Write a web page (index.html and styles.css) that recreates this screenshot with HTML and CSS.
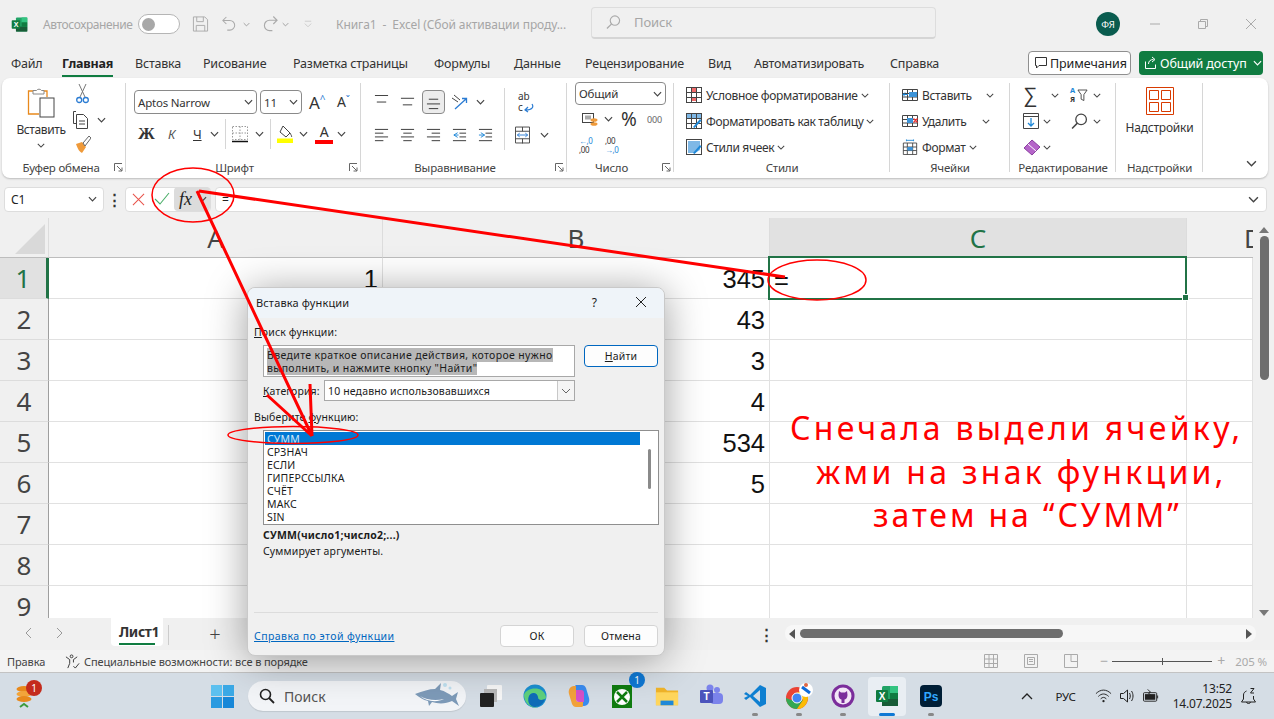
FILE: index.html
```html
<!DOCTYPE html>
<html lang="ru">
<head>
<meta charset="utf-8">
<title>Excel</title>
<link rel="stylesheet" href="styles.css">
</head>
<body>
<svg class="defs" width="0" height="0">
  <symbol id="chev" viewBox="0 0 10 6"><path d="M1 1l4 4 4-4" fill="none" stroke="#444" stroke-width="1.3"/></symbol>
  <symbol id="xl" viewBox="0 0 24 24"><rect x="7" y="2" width="16" height="20" rx="1.5" fill="#21a366"/><rect x="15" y="2" width="8" height="7" fill="#33c481"/><rect x="7" y="15" width="16" height="7" fill="#185c37"/><rect x="15" y="9" width="8" height="6" fill="#107c41"/><rect x="1" y="6" width="12" height="12" rx="1" fill="#107c41"/><text x="7" y="15.5" text-anchor="middle" font-size="10" font-weight="700" fill="#fff" font-family="Liberation Sans">X</text></symbol>
  <symbol id="launch" viewBox="0 0 9 9"><path d="M.5 8V.5H8M3 3l5 5M8 4.5V8H4.5" fill="none" stroke="#666"/></symbol>
  <symbol id="al-top" viewBox="0 0 16 16"><path d="M1 .5h14M3 7.5h10" stroke="#333" fill="none"/></symbol>
  <symbol id="al-mid" viewBox="0 0 16 16"><path d="M1 3.500h14M3 10.500h10" stroke="#333" fill="none"/></symbol>
  <symbol id="al-bot" viewBox="0 0 16 16"><path d="M3 4.500h10M1 9.500h14M3 14.500h10" stroke="#333" fill="none"/></symbol>
  <symbol id="al-l" viewBox="0 0 16 16"><path d="M1 1.5h14M1 5.5h9M1 9.5h14M1 13.5h9" stroke="#333" fill="none"/></symbol>
  <symbol id="al-c" viewBox="0 0 16 16"><path d="M1 1.5h14M3.5 5.5h9M1 9.5h14M3.5 13.5h9" stroke="#333" fill="none"/></symbol>
  <symbol id="al-r" viewBox="0 0 16 16"><path d="M1 1.5h14M6 5.5h9M1 9.5h14M6 13.5h9" stroke="#333" fill="none"/></symbol>
  <symbol id="ind-l" viewBox="0 0 16 16"><path d="M1 1.5h14M8 5.5h7M8 9.5h7M1 13.5h14" stroke="#333" fill="none"/><path d="M6 5L2 7.5 6 10M2 7.5h5" stroke="#1e88d8" fill="none"/></symbol>
  <symbol id="ind-r" viewBox="0 0 16 16"><path d="M1 1.5h14M8 5.5h7M8 9.5h7M1 13.5h14" stroke="#333" fill="none"/><path d="M3 5l4 2.5L3 10M1 7.5h6" stroke="#1e88d8" fill="none"/></symbol>
  <symbol id="styleico" viewBox="0 0 16 16"><rect x=".5" y=".5" width="15" height="15" fill="#fff" stroke="#444"/><rect x="5" y="1" width="6" height="4" fill="#f26b6b"/><rect x="5" y="10" width="6" height="4" fill="#f26b6b"/><path d="M5.5 1v14M10.5 1v14M1 5.5h14M1 10.5h14" stroke="#444" fill="none"/></symbol>
  <symbol id="tableico" viewBox="0 0 16 16"><rect x=".5" y=".5" width="15" height="15" fill="#fff" stroke="#444"/><rect x="1" y="1" width="14" height="4" fill="#7fb8e6"/><path d="M5.5 1v14M10.5 1v14M1 5.5h14M1 10.5h14" stroke="#444" fill="none"/><path d="M7 14l7-8 1.6 1.5-7 7.5z" fill="#1e88d8"/></symbol>
  <symbol id="cellico" viewBox="0 0 16 16"><rect x=".5" y=".5" width="15" height="15" fill="#fff" stroke="#444"/><path d="M2 2h12v9l-5 3H2z" fill="#7fb8e6"/><path d="M7 14l7-8 1.6 1.5-7 7.5z" fill="#1e88d8"/></symbol>
  <symbol id="insico" viewBox="0 0 16 16"><path d="M.5 2.5h15v11H.5zM5.5 2.5v11M10.5 2.5v11M.5 6.5h15M.5 10h15" fill="#fff" stroke="#444"/><rect x="7" y="5" width="8" height="5" fill="#3d94d8"/><path d="M6 7.5H1M3 5.5L1 7.5l2 2" stroke="#1e88d8" fill="none"/></symbol>
  <symbol id="delico" viewBox="0 0 16 16"><path d="M.5 2.5h15v11H.5zM5.5 2.5v11M10.5 2.5v11M.5 6.5h15M.5 10h15" fill="#fff" stroke="#444"/><rect x="5" y="5" width="6" height="5" fill="#3d94d8"/><path d="M11.5 5.5l4 4M15.5 5.5l-4 4" stroke="#e33" fill="none" stroke-width="1.3"/></symbol>
  <symbol id="fmtico" viewBox="0 0 16 18"><path d="M.5 4.5h15v13H.5zM5 4.5v13M11 4.5v13M.5 9h15M.5 13h15" fill="#fff" stroke="#444"/><rect x="5" y="9" width="6" height="4" fill="#3d94d8"/><path d="M4 1.5h8M4 .5v2M12 .5v2" stroke="#1e88d8" fill="none"/></symbol>
  <symbol id="search" viewBox="0 0 16 16"><circle cx="9.5" cy="6.5" r="5" fill="none" stroke="currentColor" stroke-width="1.2"/><path d="M6 10l-5 5" stroke="currentColor" stroke-width="1.4" fill="none"/></symbol>
</svg>

<div class="app">
  <header class="titlebar">
    <svg class="xl-logo"><use href="#xl"/></svg>
    <span class="autosave">Автосохранение</span>
    <span class="toggle"><i></i></span>
    <svg class="qat save" viewBox="0 0 18 18"><path d="M1.5 1.5h12l3 3v12h-15zM5 1.5v5h7v-5M4.500 16.500v-6h9v6" fill="none" stroke="#aaa"/></svg>
    <svg class="qat undo" viewBox="0 0 16 18"><path d="M5 1L1 5l4 4M1 5h8a5.500 5.500 0 0 1 0 11H6" fill="none" stroke="#aaa" stroke-width="1.2"/></svg>
    <svg class="mini c1"><use href="#chev"/></svg>
    <svg class="qat redo" viewBox="0 0 16 18"><path d="M11 1l4 4-4 4M15 5H7a5.500 5.500 0 0 0 0 11h3" fill="none" stroke="#aaa" stroke-width="1.2"/></svg>
    <svg class="mini c2"><use href="#chev"/></svg>
    <svg class="mini c3" viewBox="0 0 10 9"><path d="M1 1h8M1 4l4 4 4-4" fill="none" stroke="#999"/></svg>
    <span class="doc">Книга1 &nbsp;-&nbsp; Excel (Сбой активации проду...</span>
    <div class="searchbox"><svg class="sb-ico"><use href="#search"/></svg><span>Поиск</span></div>
    <span class="avatar">ФЯ</span>
    <div class="winbtns">
      <svg viewBox="0 0 12 12"><path d="M1 6h10" stroke="#aaa" fill="none"/></svg>
      <svg viewBox="0 0 12 12"><path d="M1.500 3.500h7v7h-7zM3.500 3V1.500h7v7H9" stroke="#aaa" fill="none"/></svg>
      <svg viewBox="0 0 12 12"><path d="M1 1l10 10M11 1L1 11" stroke="#aaa" fill="none"/></svg>
    </div>
  </header>

  <nav class="tabs">
    <div class="tablist">
      <span>Файл</span><span class="active">Главная</span><span>Вставка</span><span>Рисование</span><span>Разметка страницы</span><span>Формулы</span><span>Данные</span><span>Рецензирование</span><span>Вид</span><span>Автоматизировать</span><span>Справка</span>
    </div>
    <button class="notes"><svg viewBox="0 0 14 14"><path d="M1.500 1.500h11v8H5L2.500 12V9.500h-1z" fill="none" stroke="#333"/></svg>Примечания</button>
    <button class="share"><svg viewBox="0 0 14 14"><path d="M1.500 5.500v7h10v-4M4.500 8c0-3 2-4.500 5-4.500M8 1l3 2.500L8 6" fill="none" stroke="#fff"/></svg>Общий доступ<svg class="sh-ch"><use href="#chev"/></svg></button>
  </nav>

  <section class="ribbon">
    <div class="group g-clip">
      <div class="gbody clip">
        <div class="pastecol">
          <svg class="paste" viewBox="0 0 28 31"><path d="M9 4H1.500v23H12" fill="#fff" stroke="#e8891c" stroke-width="1.300"/><path d="M17 4h3v6" fill="none" stroke="#e8891c" stroke-width="1.300"/><path d="M6 6V3.500h3.500a3 3 0 0 1 5 0H17V7H6z" fill="#fff" stroke="#888"/><rect x="13" y="11" width="14" height="19" fill="#fff" stroke="#444"/></svg>
          <span>Вставить</span>
          <svg class="pc-ch"><use href="#chev"/></svg>
        </div>
        <div class="clipcol">
          <svg class="cut" viewBox="0 0 13 20"><path d="M3 0l6 13M10 0L4 13" stroke="#777" fill="none"/><circle cx="3.200" cy="16" r="2.500" fill="none" stroke="#2b7cd3" stroke-width="1.300"/><circle cx="9.800" cy="16" r="2.500" fill="none" stroke="#2b7cd3" stroke-width="1.300"/></svg>
          <div class="copyrow"><svg class="copy" viewBox="0 0 17 19"><path d="M4 1.500H1.500v12H4M4.500 4.500h7l4 4v10h-11z" fill="#fff" stroke="#444"/><path d="M7 11h6M7 14h6" stroke="#444"/></svg><svg class="ch"><use href="#chev"/></svg></div>
          <svg class="brush" viewBox="0 0 16 18"><path d="M1 9l6-2 4 5-4 6c-2-1-4-3-6-9z" fill="#ef9a3a"/><path d="M8 8l6-7 2 2-6 8z" fill="#fff" stroke="#666"/></svg>
        </div>
      </div>
      <div class="glabel">Буфер обмена<svg class="launch"><use href="#launch"/></svg></div>
    </div>

    <div class="group g-font">
      <div class="gbody font">
        <div class="frow1">
          <div class="sel fontname"><span>Aptos Narrow</span><svg class="ch"><use href="#chev"/></svg></div>
          <div class="sel fontsize"><span>11</span><svg class="ch"><use href="#chev"/></svg></div>
          <span class="growA">A<sup>^</sup></span>
          <span class="shrinkA">A<sup>ˇ</sup></span>
        </div>
        <div class="frow2">
          <b class="fb">Ж</b><i class="fi">К</i><u class="fu">Ч</u><svg class="ch"><use href="#chev"/></svg>
          <span class="vsep"></span>
          <svg class="bord" viewBox="0 0 16 17"><path d="M.5.500h15v13H.5zM8 .5v13M.5 7h15" fill="none" stroke="#999" stroke-dasharray="1.500 1.500"/><path d="M0 15.500h16" stroke="#111" stroke-width="1.500"/></svg><svg class="ch"><use href="#chev"/></svg>
          <span class="vsep"></span>
          <svg class="fill" viewBox="0 0 16 18"><path d="M6 1l7 7-4 4-6-5z" fill="#fff" stroke="#444"/><path d="M13 8c1 2 2 3 1.500 4" stroke="#444" fill="none"/><rect y="13.500" width="16" height="4.500" fill="#ffff00"/></svg><svg class="ch"><use href="#chev"/></svg>
          <span class="colorA">A</span><svg class="ch"><use href="#chev"/></svg>
        </div>
      </div>
      <div class="glabel">Шрифт<svg class="launch"><use href="#launch"/></svg></div>
    </div>

    <div class="group g-align">
      <div class="gbody align">
        <div class="alignmain">
          <div class="arow1">
            <svg class="al"><use href="#al-top"/></svg>
            <svg class="al"><use href="#al-mid"/></svg>
            <span class="albox"><svg class="al"><use href="#al-bot"/></svg></span>
            <svg class="orient" viewBox="0 0 18 18"><path d="M5 16L16 6M12 5.500l4.500 0 0 4.500" fill="none" stroke="#2b7cd3" stroke-width="1.300"/><path d="M2 5l6 4M4 2l6 5" stroke="#444" fill="none"/></svg>
            <svg class="ch"><use href="#chev"/></svg>
          </div>
          <div class="arow2">
            <svg class="al"><use href="#al-l"/></svg>
            <svg class="al"><use href="#al-c"/></svg>
            <svg class="al"><use href="#al-r"/></svg>
            <svg class="al"><use href="#ind-l"/></svg>
            <svg class="al"><use href="#ind-r"/></svg>
          </div>
        </div>
        <span class="vsep tall"></span>
        <div class="wrapcol">
          <div class="wrap"><span>ab</span><span>c<svg class="wrapar" viewBox="0 0 10 10"><path d="M8 1c2 3 0 6-6 6M4 4L1 7l3 2" fill="none" stroke="#2b7cd3" stroke-width="1.200"/></svg></span></div>
          <div class="mergerow"><svg class="merge" viewBox="0 0 16 18"><path d="M.5.500h15v17H.5zM.5 5h15M.5 13h15M8 .5V5M8 13v5" fill="#fff" stroke="#444"/><path d="M2.500 9h11M5 7L2.500 9 5 11M11 7l2.500 2-2.500 2" fill="none" stroke="#2b7cd3"/></svg><svg class="ch"><use href="#chev"/></svg></div>
        </div>
      </div>
      <div class="glabel">Выравнивание<svg class="launch"><use href="#launch"/></svg></div>
    </div>

    <div class="group g-num">
      <div class="gbody num">
        <div class="sel numfmt"><span>Общий</span><svg class="ch"><use href="#chev"/></svg></div>
        <div class="nrow1">
          <svg class="money" viewBox="0 0 16 16"><rect x=".5" y="2.500" width="11" height="9" fill="#fff" stroke="#444"/><rect x="3" y="4.500" width="6" height="4" fill="#aaa"/><ellipse cx="12" cy="9" rx="3.500" ry="1.800" fill="#ef9a3a"/><ellipse cx="12" cy="13" rx="3.500" ry="1.800" fill="#ef9a3a"/></svg>
          <svg class="ch"><use href="#chev"/></svg>
          <span class="pct">%</span>
          <span class="thou">000</span>
        </div>
        <div class="nrow2">
          <span class="dec"><em>←,0</em><span>,00</span></span>
          <span class="dec"><span>,00</span><em>→,0</em></span>
        </div>
      </div>
      <div class="glabel">Число<svg class="launch"><use href="#launch"/></svg></div>
    </div>

    <div class="group g-styles">
      <div class="gbody cmdlist">
        <div class="cmd"><svg class="c16"><use href="#styleico"/></svg><span>Условное форматирование</span><svg class="ch"><use href="#chev"/></svg></div>
        <div class="cmd"><svg class="c16"><use href="#tableico"/></svg><span>Форматировать как таблицу</span><svg class="ch"><use href="#chev"/></svg></div>
        <div class="cmd"><svg class="c16"><use href="#cellico"/></svg><span>Стили ячеек</span><svg class="ch"><use href="#chev"/></svg></div>
      </div>
      <div class="glabel">Стили</div>
    </div>

    <div class="group g-cells">
      <div class="gbody cmdlist">
        <div class="cmd"><svg class="c16"><use href="#insico"/></svg><span class="w-ins">Вставить</span><svg class="ch"><use href="#chev"/></svg></div>
        <div class="cmd"><svg class="c16"><use href="#delico"/></svg><span class="w-del">Удалить</span><svg class="ch"><use href="#chev"/></svg></div>
        <div class="cmd"><svg class="c16"><use href="#fmtico"/></svg><span>Формат</span><svg class="ch"><use href="#chev"/></svg></div>
      </div>
      <div class="glabel">Ячейки</div>
    </div>

    <div class="group g-edit">
      <div class="gbody edit">
        <span class="sigma">∑</span><svg class="ch ch-end"><use href="#chev"/></svg>
        <span class="sortcell"><span class="az"><em>А</em><span>Я</span></span><svg class="sort" viewBox="0 0 12 14"><path d="M1 1h10L7.500 6v6.500l-3-1.500V6z" fill="none" stroke="#444"/></svg></span><svg class="ch ch-r"><use href="#chev"/></svg>
        <svg class="fillico" viewBox="0 0 16 18"><path d="M.5 1.500h15v15H.5zM1 4.500h14" fill="#fff" stroke="#444"/><path d="M8 6v8M5 11l3 3 3-3" fill="none" stroke="#1e88d8" stroke-width="1.300"/></svg><svg class="ch"><use href="#chev"/></svg>
        <span class="findcell"><svg class="find"><use href="#search"/></svg></span><svg class="ch ch-r"><use href="#chev"/></svg>
        <svg class="eraser" viewBox="0 0 18 18"><path d="M1 10l8-8 8 7-8 8z" fill="#b565c9" stroke="#8a3fa0"/><path d="M5 6l8 7" stroke="#fff"/></svg><svg class="ch"><use href="#chev"/></svg>
      </div>
      <div class="glabel">Редактирование</div>
    </div>

    <div class="group g-add">
      <div class="gbody addin">
        <svg class="addico" viewBox="0 0 28 28"><path d="M.5.500h27v27H.5z" fill="#fff" stroke="#d83b01"/><path d="M3.500 3.500h9v9h-9zM15.500 3.500h9v9h-9zM3.500 15.500h9v9h-9zM15.500 15.500h9v9h-9z" fill="none" stroke="#d83b01"/></svg>
        <span>Надстройки</span>
      </div>
      <div class="glabel">Надстройки</div>
    </div>
    <svg class="collapse"><use href="#chev"/></svg>
  </section>

  <div class="formula">
    <div class="namebox"><span>C1</span><svg class="ch"><use href="#chev"/></svg></div>
    <span class="kebab">⋮</span>
    <div class="fxgroup">
      <svg class="fx-x" viewBox="0 0 14 14"><path d="M1 1l12 12M13 1L1 13" stroke="#e8534a" fill="none" stroke-width="1.100"/></svg>
      <svg class="fx-ok" viewBox="0 0 16 14"><path d="M1 7l5 5L15 1" stroke="#4caf6a" fill="none" stroke-width="1.100"/></svg>
      <div class="fxbtn"><i>fx</i><svg class="ch"><use href="#chev"/></svg></div>
    </div>
    <div class="finput"><span>=</span><svg class="ch"><use href="#chev"/></svg></div>
  </div>

  <div class="sheetwrap">
    <div class="grid">
      <div class="hd corner"><i></i></div><div class="hd">A</div><div class="hd">B</div><div class="hd hot">C</div><div class="hd dcol">D</div>
      <div class="rh hot">1</div><div class="c num">1</div><div class="c num">345</div><div class="c sel-cell">=</div><div class="c"></div>
      <div class="rh">2</div><div class="c"></div><div class="c num">43</div><div class="c"></div><div class="c"></div>
      <div class="rh">3</div><div class="c"></div><div class="c num">3</div><div class="c"></div><div class="c"></div>
      <div class="rh">4</div><div class="c"></div><div class="c num">4</div><div class="c"></div><div class="c"></div>
      <div class="rh">5</div><div class="c"></div><div class="c num">534</div><div class="c"></div><div class="c"></div>
      <div class="rh">6</div><div class="c"></div><div class="c num">5</div><div class="c"></div><div class="c"></div>
      <div class="rh">7</div><div class="c"></div><div class="c"></div><div class="c"></div><div class="c"></div>
      <div class="rh">8</div><div class="c"></div><div class="c"></div><div class="c"></div><div class="c"></div>
      <div class="rh">9</div><div class="c"></div><div class="c"></div><div class="c"></div><div class="c"></div>
    </div>
    <div class="vscroll"><span class="up"></span><span class="vthumb"></span><span class="down"></span></div>
  </div>

  <div class="sheetbar">
    <div class="nav"><svg viewBox="0 0 8 12"><path d="M7 1L2 6l5 5" fill="none" stroke="#999"/></svg><svg viewBox="0 0 8 12"><path d="M1 1l5 5-5 5" fill="none" stroke="#999"/></svg></div>
    <div class="sheettab"><span>Лист1</span></div>
    <span class="tabsep"></span>
    <span class="plus">+</span>
    <span class="kebab k2">⋮</span>
    <div class="hscroll"><span class="left"></span><span class="hthumb"></span><span class="right"></span></div>
  </div>

  <div class="status">
    <span class="ready">Правка</span>
    <svg class="acc" viewBox="0 0 16 16"><circle cx="7" cy="2.500" r="1.500" fill="none" stroke="#333"/><path d="M1 3l4 3v4l-2 5M13 3L9 6v3M9 13l2 2 4-5" fill="none" stroke="#333"/></svg>
    <span>Специальные возможности: все в порядке</span>
    <div class="viewbtns">
      <svg viewBox="0 0 14 14"><path d="M.5.500h13v13H.5zM5 .5v13M9.500.5v13M.5 5h13M.5 9.500h13" fill="none" stroke="#aaa"/></svg>
      <svg viewBox="0 0 14 14"><path d="M.5.500h13v13H.5zM3.500 3.500h7v7h-7zM5 5.500h4M5 7.500h4" fill="none" stroke="#aaa"/></svg>
      <svg viewBox="0 0 14 14"><path d="M.5.500h13v13H.5zM7 .5v7h6.500" fill="none" stroke="#aaa"/></svg>
    </div>
    <span class="zm">−</span><span class="slider"><i></i></span><span class="zm">+</span><span class="pctz">205 %</span>
  </div>

  <footer class="taskbar">
    <div class="coins">
      <svg viewBox="0 0 20 24"><ellipse cx="9" cy="5" rx="7.500" ry="3" fill="#e8891c"/><ellipse cx="9" cy="10" rx="7.500" ry="3" fill="#f2a43a"/><ellipse cx="9" cy="15" rx="7.500" ry="3" fill="#e8891c"/><path d="M5 23l4-3 4 3" fill="none" stroke="#3c9b3c" stroke-width="2"/></svg>
      <b class="badge red">1</b>
    </div>
    <svg class="start" viewBox="0 0 23 23"><rect width="11" height="11" fill="#5cc0ef"/><rect x="12" width="11" height="11" fill="#3ba9e6"/><rect y="12" width="11" height="11" fill="#2a9ae0"/><rect x="12" y="12" width="11" height="11" fill="#1787d8"/></svg>
    <div class="tsearch">
      <svg class="ts-ico" viewBox="0 0 16 16"><circle cx="6.500" cy="6.500" r="5" fill="none" stroke="#222" stroke-width="1.600"/><path d="M10 10l5 5" stroke="#222" stroke-width="1.800"/></svg>
      <span>Поиск</span>
      <svg class="shark" viewBox="0 0 46 30"><path d="M1 13c8-3 14-5 20-5l6-6-1 7c5 1 9 4 12 6l6-4-2 7 3 7-7-5c-6 3-14 3-20 1l-3 4-1-5C9 19 5 16 1 13z" fill="#7d9ab8"/><path d="M6 15c6 4 16 5 24 3-8 4-18 2-24-3z" fill="#fff"/><circle cx="31" cy="4" r="2" fill="#bfe0f0"/><circle cx="36" cy="7" r="1.500" fill="#bfe0f0"/></svg>
    </div>
    <div class="apps">
      <span class="app-s"><svg class="a24" viewBox="0 0 24 24"><rect x="8" y="1" width="15" height="15" rx="1" fill="#f6f6f6"/><rect x="5" y="5" width="13" height="13" fill="#b8b8b8"/><rect x="1" y="9" width="14" height="14" rx="1" fill="#222"/></svg></span>
      <span class="app-s"><svg class="a24" viewBox="0 0 24 24"><circle cx="12" cy="12" r="11.500" fill="#1b8ecf"/><path d="M1 11C3 3 21 1 23 13c0 4-8 5-9 1 2-5-6-7-8-1-1 5 4 9 9 10C8 25 1 19 1 11z" fill="#5fd07c"/><path d="M6 12c2-4 8-4 9 1 0 4 5 3 7 2-2 6-7 8-11 8-5-1-7-6-5-11z" fill="#0f6cb8"/></svg></span>
      <span class="app-s"><svg class="a24" viewBox="0 0 24 24"><path d="M9 1h6c2 0 3 1 4 3l3 10c1 4-1 8-5 8h-2V9c0-2-1-3-3-3H8C8 3 8 1 9 1z" fill="#3a8bf0"/><path d="M15 23H9c-2 0-3-1-4-3L2 10C1 6 3 2 7 2h2v13c0 2 1 3 3 3h4c0 3 0 5-1 5z" fill="#f2a23a"/><path d="M9 6h5c2 0 3 1 3 3v9h-5c-2 0-3-1-3-3z" fill="#d850c8"/></svg></span>
      <span class="app-s"><svg class="a24" viewBox="0 0 24 24"><rect x="1" y="1" width="20" height="23" fill="#107c10"/><circle cx="11" cy="13" r="8" fill="#fff"/><path d="M6 8l10 10M16 8L6 18" stroke="#107c10" stroke-width="2.500"/></svg><b class="badge blue">1</b></span>
      <span class="app-s"><svg class="a24" viewBox="0 0 26 24"><path d="M1 3h9l3 3h12v16H1z" fill="#f0b429"/><path d="M1 8h24v14H1z" fill="#ffd65c"/><rect x="6" y="17" width="14" height="5" fill="#1e88d8"/></svg></span>
      <span class="app-s"><svg class="a24" viewBox="0 0 24 24"><circle cx="18" cy="6" r="3" fill="#7b83eb"/><circle cx="11" cy="4" r="3.500" fill="#7b83eb"/><rect x="11" y="9" width="13" height="11" rx="4" fill="#7b83eb"/><rect x="1" y="6" width="13" height="13" rx="1" fill="#4b53bc"/><text x="7.500" y="16" text-anchor="middle" font-size="10" font-weight="700" fill="#fff" font-family="Liberation Sans">T</text></svg></span>
      <span class="app-s"><svg class="a24" viewBox="0 0 24 24"><path d="M17 1l6 3v16l-6 3L7 13l-4 3-2-2 4-2-4-2 2-2 4 3z" fill="#0e7fd1"/><path d="M17 6v12l-7-6z" fill="#d5dde5"/></svg></span>
      <span class="app-s"><svg class="a28" viewBox="0 0 28 28"><circle cx="12" cy="16" r="11" fill="#ea4335"/><path d="M1 16a11 11 0 0 0 11 11l6-9H6z" fill="#34a853"/><path d="M12 27a11 11 0 0 0 9-17h-9l6 8z" fill="#fbbc05"/><circle cx="12" cy="16" r="5" fill="#4285f4" stroke="#fff"/><circle cx="21" cy="8" r="7" fill="#fff"/><path d="M17 5l8 6" stroke="#0d6ad8" stroke-width="3"/><circle cx="21" cy="3" r="2" fill="#d64"/></svg></span>
      <span class="app-s"><svg class="a24" viewBox="0 0 24 24"><circle cx="12" cy="12" r="11.500" fill="#7b2d9b"/><circle cx="12" cy="12" r="8.500" fill="#f3e6f7"/><path d="M8 7l2 1.500h4L16 7l.5 4c0 3-2 4.500-3 4.500V19h-3v-3.500c-1 0-3-1.500-3-4.500z" fill="#7b2d9b"/></svg></span>
      <span class="app-s on"><svg class="a24" viewBox="0 0 24 24"><use href="#xl"/></svg></span>
      <span class="app-s"><svg class="a24" viewBox="0 0 24 24"><rect x="1" y="1" width="22" height="22" rx="4" fill="#001e36"/><text x="12" y="16.500" text-anchor="middle" font-size="12" font-weight="700" fill="#31a8ff" font-family="Liberation Sans">Ps</text></svg></span>
    </div>
    <div class="tray">
      <svg class="tchev" viewBox="0 0 12 7"><path d="M1 6l5-5 5 5" fill="none" stroke="#222" stroke-width="1.300"/></svg>
      <span class="lang">РУС</span>
      <svg class="t16" viewBox="0 0 18 16"><path d="M1 5.500c5-5 11-5 16 0M3.500 8.500c3.500-3.500 7.500-3.500 11 0M6 11c2-2 4-2 6 0" fill="none" stroke="#222"/><circle cx="9" cy="13.500" r="1.200" fill="#222"/></svg>
      <svg class="t16" viewBox="0 0 16 16"><path d="M1 5.500h3l4-3.500v12l-4-3.500H1z" fill="none" stroke="#222"/><path d="M10 5c1 2 1 4 0 6M12 3c2 3 2 7 0 10" fill="none" stroke="#222"/></svg>
      <svg class="t16" viewBox="0 0 18 16"><rect x=".5" y="4.500" width="14" height="9" rx="1" fill="none" stroke="#222"/><rect x="2" y="6" width="11" height="6" fill="#222"/><path d="M15.500 7.500v3" stroke="#222"/><path d="M5 1l3 3-2 1 3 3" fill="none" stroke="#222"/></svg>
      <div class="clock"><span>13:52</span><span>14.07.2025</span></div>
      <svg class="t16 bell" viewBox="0 0 16 18"><path d="M6 4C4 5 3 6 3 8v4l-2 3h14l-2-3V9M6 15c0 2 4 2 4 0M10 1.500h3.500L10 6h3.500" fill="none" stroke="#222"/></svg>
    </div>
  </footer>
</div>

<div class="dialog">
  <div class="dtitle"><span>Вставка функции</span><span class="q">?</span><svg viewBox="0 0 12 12"><path d="M1 1l10 10M11 1L1 11" stroke="#222" fill="none"/></svg></div>
  <div class="dbody">
    <div class="dl l1"><u>П</u>оиск функции:</div>
    <div class="drow1">
      <div class="dinput"><span>Введите краткое описание действия, которое нужно</span><br><span>выполнить, и нажмите кнопку "Найти"</span></div>
      <button class="dbtn primary"><u>Н</u>айти</button>
    </div>
    <div class="drow2">
      <span class="catlabel"><u>К</u>атегория:</span>
      <div class="dselect"><span>10 недавно использовавшихся</span><i><svg viewBox="0 0 10 6"><path d="M1 1l4 4 4-4" fill="none" stroke="#666"/></svg></i></div>
    </div>
    <div class="dl l2">Выберите <u>ф</u>ункцию:</div>
    <div class="dlist">
      <div class="item selitem">СУММ</div>
      <div class="item">СРЗНАЧ</div>
      <div class="item">ЕСЛИ</div>
      <div class="item">ГИПЕРССЫЛКА</div>
      <div class="item">СЧЁТ</div>
      <div class="item">МАКС</div>
      <div class="item">SIN</div>
      <span class="dthumb"></span>
    </div>
    <div class="fnsig">СУММ(число1;число2;...)</div>
    <div class="fndesc">Суммирует аргументы.</div>
    <div class="dfoot">
      <a class="helplink">Справка по этой функции</a>
      <button class="dbtn">ОК</button>
      <button class="dbtn">Отмена</button>
    </div>
  </div>
</div>

<svg class="annot" viewBox="0 0 1274 719">
  <ellipse cx="193" cy="195" rx="41" ry="27" fill="none" stroke="#f00" stroke-width="1.500"/>
  <ellipse cx="817" cy="280" rx="49" ry="20" fill="none" stroke="#f00" stroke-width="1.500"/>
  <ellipse cx="293" cy="435" rx="65" ry="8.500" fill="none" stroke="#f00" stroke-width="1.500"/>
  <path d="M199 191L785 277M197 191L312 436M310 384L312 436M267 395L312 436" fill="none" stroke="#f00" stroke-width="3"/>
</svg>

<div class="note">
  <div class="n1">Снечала выдели ячейку,</div>
  <div class="n2">жми на знак функции,</div>
  <div class="n3">затем на “СУММ”</div>
</div>
</body>
</html>
```

FILE: styles.css
```css
*{box-sizing:border-box}
html,body{margin:0;padding:0;width:1274px;height:719px;overflow:hidden}
body{position:relative;background:#f0f0f0;font-family:"Noto Sans","Open Sans",sans-serif;color:#222}
.defs{position:absolute}
svg{display:block;flex:none}
.ch{width:9px;height:6px}
.app{width:1274px;height:719px;display:flex;flex-direction:column}

/* title bar */
.titlebar{height:45px;display:flex;align-items:center;padding:3px 0 0 11px;font-size:12px;color:#a6a6a6;letter-spacing:-.1px}
.xl-logo{width:17px;height:17px;margin-right:15px}
.autosave{width:95px;white-space:nowrap;letter-spacing:-.4px}
.toggle{width:42px;height:20px;border:1.500px solid #b5b5b5;border-radius:10px;background:#fff;padding:3px;margin-right:12px}
.toggle i{display:block;width:13px;height:13px;border-radius:50%;background:#a8a8a8}
.qat{width:17px;height:18px}
.save{margin-right:13px}
.undo{width:14px}
.redo{width:15px}
.mini{width:7px;height:5px;opacity:.5}
.c1{margin:0 13px 0 7px}
.c2{margin:0 15px 0 4px}
.c3{width:8px;height:8px;margin-right:24px}
.doc{width:255px;white-space:nowrap;font-size:12px}
.searchbox{width:345px;height:32px;margin-top:-3px;border:1px solid #ddd;border-bottom:2px solid #d5d5d5;border-radius:4px;display:flex;align-items:center;padding-left:14px;gap:13px;font-size:13px;color:#a6a6a6}
.sb-ico{width:15px;height:16px;color:#aaa}
.avatar{width:24px;height:24px;margin-left:160px;background:#0a5c4f;border-radius:50%;color:#fff;font-size:9.500px;display:flex;align-items:center;justify-content:center;letter-spacing:0}
.winbtns{display:flex;margin-left:29px;gap:36px}
.winbtns svg{width:12px;height:12px}

/* tabs */
.tabs{height:33px;display:flex;align-items:flex-start;padding:6px 0 0 11px;font-size:12.500px;color:#333}
.tablist{display:grid;grid-template-columns:51px 73px 68px 90px 141px 80px 71px 123px 46px 136px 138px;white-space:nowrap;height:24px;letter-spacing:-.2px;line-height:25px}
.tablist .active{font-weight:700;color:#222;position:relative;justify-self:start}
.tablist .active::after{content:"";position:absolute;left:0;right:0;bottom:-1px;height:2px;background:#107c41}
.notes,.share{height:24px;display:flex;align-items:center;border-radius:4px;font:inherit;letter-spacing:-.1px;padding:0 0 0 5px;gap:2px;white-space:nowrap}
.notes{width:103px;border:1px solid #8f8f8f;background:#fff;color:#222}
.notes svg{width:14px;height:14px}
.share{width:124px;margin-left:8px;border:0;background:#107c41;color:#fff}
.share svg{width:14px;height:14px}
.share .sh-ch{width:9px;height:6px;margin-left:4px;filter:invert(1) brightness(2)}

/* ribbon */
.ribbon{height:100px;margin:0 6px 0 2px;background:#fff;border-radius:8px;box-shadow:0 1px 2px rgba(0,0,0,.22);display:flex;position:relative;font-size:12px;letter-spacing:-.2px;color:#333;flex:none}
.group{display:flex;flex-direction:column;position:relative;padding-top:4px}
.group::after{content:"";position:absolute;right:0;top:5px;bottom:6px;width:1px;background:#d6d6d6}
.gbody{height:78px}
.glabel{height:16px;text-align:center;font-size:11.500px;line-height:16px;color:#444;white-space:nowrap}
.launch{position:absolute;right:3px;bottom:6px;width:9px;height:9px}
.g-clip{width:124px}.g-font{width:235px}.g-align{width:206px}.g-num{width:107px}
.g-styles{width:216px}.g-cells{width:120px}.g-edit{width:106px}.g-add{width:87px}
.g-clip .glabel{padding-right:6px}
.g-font .glabel,.g-align .glabel,.g-num .glabel{padding-right:18px}

.clip{display:flex;padding:5px 0 0 13px}
.pastecol{width:52px;display:flex;flex-direction:column;align-items:center;white-space:nowrap;letter-spacing:-.4px}
.paste{width:28px;height:31px}
.pastecol span{margin-top:3px;line-height:17px}
.pc-ch{width:8px;height:5px;margin-top:5px}
.clipcol{margin-left:5px;display:flex;flex-direction:column;margin-top:-3px}
.cut{width:13px;height:20px;margin-left:4px}
.copyrow{display:flex;align-items:center;gap:8px;margin-top:6px}
.copy{width:17px;height:19px}
.brush{width:16px;height:18px;margin-top:6px;margin-left:3px}

.font{padding:8px 0 0 8px;display:flex;flex-direction:column}
.frow1{display:flex;align-items:center;height:24px}
.sel{border:1px solid #8a8a8a;border-radius:4px;height:24px;display:flex;align-items:center;justify-content:space-between;padding:0 3px;font-size:11.500px;background:#fff}
.fontname{width:123px;margin-right:3px}
.fontsize{width:42px}
.growA{font-size:17px;margin-left:7px;width:28px;color:#333;line-height:1}
.shrinkA{font-size:14px;color:#333;line-height:1}
.growA sup,.shrinkA sup{font-size:10px;color:#2b7cd3;vertical-align:top;line-height:1}
.frow2{display:flex;align-items:center;height:24px;margin:8px 0 0 4px}
.frow2 .ch{margin-right:0}
.fb{font-family:"Liberation Serif",serif;font-size:17px;width:26px;padding-left:0}
.fi{font-size:13px;width:26px;color:#555;padding-left:4px}
.fu{font-size:13px;width:20px;padding-left:3px;color:#333}
.fb,.fi,.fu{display:block}
.vsep{width:1px;height:30px;background:#d6d6d6;margin:0 6px}
.bord{width:16px;height:17px;margin-right:7px;margin-left:0}
.fill{width:16px;height:18px;margin-right:6px}
.colorA{width:18px;font-size:14px;line-height:1;border-bottom:4px solid #f00;margin-left:7px;margin-right:4px;text-align:center;padding-bottom:1px}

.align{display:flex;padding:8px 0 0 13px}
.alignmain{width:130px}
.arow1{display:grid;grid-template-columns:26px 26px 26px 24px auto;align-items:center;height:24px;justify-items:start}
.arow2{display:grid;grid-template-columns:26px 26px 26px 26px 26px;align-items:center;height:24px;margin-top:9px;justify-items:start}
.al{width:15px;height:15px}
.albox{display:flex;width:23px;height:24px;margin-left:-4px;border:1px solid #8a8a8a;border-radius:4px;background:#ececec;align-items:center;justify-content:center}
.orient{width:18px;height:18px;margin-left:-2px}
.vsep.tall{height:62px;margin:-2px 10px 0 0}
.wrapcol{display:flex;flex-direction:column}
.wrap{height:24px;font-size:10px;line-height:11px;padding-left:3px;padding-top:1px}
.wrap span{display:flex;align-items:center}
.wrapar{width:10px;height:10px;margin-left:1px}
.mergerow{display:flex;align-items:center;gap:10px;margin-top:9px;height:24px}
.merge{width:15px;height:18px}

.num{padding:0 0 0 8px}
.numfmt{width:91px;height:23px;padding:0 3px}
.nrow1{display:flex;align-items:center;height:26px;padding:2px 0 0 7px}
.money{width:16px;height:16px}
.nrow1 .ch{margin-left:6px}
.pct{font-size:19px;margin-left:8px;line-height:1;width:26px}
.thou{font-size:9px;color:#666}
.nrow2{display:flex;gap:10px;padding-left:4px;margin-top:5px}
.dec{display:flex;flex-direction:column;font-size:8px;line-height:9px;width:16px;white-space:nowrap;letter-spacing:-.4px}
.dec em{font-style:normal;color:#1e88d8}

.cmdlist{display:flex;flex-direction:column;padding:0 0 0 12px;gap:0;letter-spacing:-.33px}
.cmd{display:flex;align-items:center;height:26px;white-space:nowrap}
.c16{width:16px;height:16px;margin-right:4px}
.cmd .ch{margin-left:3px;width:8px;height:5px}
.w-ins{width:61px}
.w-del{width:57px}

.edit{display:grid;grid-template-columns:20px 16px 29px 14px;grid-auto-rows:26px;align-items:center;padding:0 0 0 13px}
.edit .ch{width:8px;height:5px}
.ch-end{justify-self:end}
.edit .ch-r{margin-left:5px}
.sigma{font-size:20px;line-height:1;padding-left:1px}
.sortcell{display:flex;align-items:center;justify-content:flex-end;gap:2px}
.az{display:flex;flex-direction:column;font-size:7.500px;line-height:9px;font-weight:700}
.az em{font-style:normal;color:#1e88d8}
.sort{width:11px;height:13px}
.findcell{display:flex;justify-content:flex-end}
.fillico{width:16px;height:18px}
.find{width:17px;height:18px;color:#444}
.eraser{width:18px;height:18px}

.addin{display:flex;flex-direction:column;align-items:center;padding-top:5px}
.addico{width:28px;height:28px}
.addin span{margin-top:4px;line-height:17px;white-space:nowrap}
.collapse{position:absolute;right:11px;bottom:11px;width:11px;height:7px}

/* formula bar */
.formula{height:26px;margin:8px 7px 6px 4px;display:flex;align-items:center;flex:none;font-size:12px}
.namebox{width:100px;height:25px;background:#fff;border:1px solid #ddd;border-radius:4px;display:flex;align-items:center;justify-content:space-between;padding:0 6px}
.kebab{width:21px;text-align:center;font-size:15px;font-weight:700;line-height:1;color:#333}
.fxgroup{width:86px;height:25px;background:#fff;border:1px solid #ddd;border-radius:4px;display:flex;align-items:center;padding-left:6px}
.fx-x{width:13px;height:13px}
.fx-ok{width:16px;height:14px;margin-left:9px}
.fxbtn{width:37px;height:24px;margin-left:4px;background:#dcdcdc;border-radius:4px;display:flex;align-items:center;padding-left:5px;gap:6px}
.fxbtn i{font-family:"Liberation Serif",serif;font-size:18px;font-weight:400}
.finput{flex:1;height:25px;margin-left:4px;background:#fff;border:1px solid #ddd;border-radius:4px;display:flex;align-items:center;justify-content:space-between;padding:0 7px 0 6px}
.finput .ch{width:11px;height:7px}

/* sheet */
.sheetwrap{flex:1;min-height:0;display:flex;overflow:hidden}
.grid{width:1253px;display:grid;grid-template-columns:49px 334px 387px 417px 66px;grid-template-rows:40px;grid-auto-rows:41px;background:#fff;overflow:hidden}
.hd{background:#f0f0f0;border-bottom:1px solid #bdbdbd;border-right:1px solid #dcdcdc;font-size:26px;color:#444;text-align:center;line-height:40px;position:relative}
.hd.hot{background:#e1e1e1;color:#217346}
.dcol{text-align:left;text-indent:57px;white-space:nowrap;overflow:hidden;border-right:0}
.corner i{position:absolute;right:3px;bottom:3px;width:30px;height:30px;background:#d9d9d9;clip-path:polygon(100% 0,100% 100%,0 100%)}
.rh{background:#f0f0f0;border-bottom:1px solid #dcdcdc;border-right:1px solid #9e9e9e;font-size:26px;color:#444;text-align:center;line-height:40px}
.rh.hot{background:#e1e1e1;color:#217346;border-right:3px solid #217346}
.c{border-right:1px solid #e1e1e1;border-bottom:1px solid #e1e1e1;font-family:"Liberation Sans",Arial,sans-serif;font-size:25.500px;line-height:42px;color:#111;padding:0 4px;overflow:visible}
.c.num{text-align:right}
.sel-cell{position:relative;line-height:44px;padding-left:4px}
.sel-cell::before{content:"";position:absolute;left:-2px;top:-2px;right:-1px;bottom:-2px;border:2px solid #217346}
.sel-cell::after{content:"";position:absolute;right:-3px;bottom:-3px;width:5px;height:5px;background:#217346;border:1px solid #fff}
.vscroll{width:21px;background:#f0f0f0;position:relative;padding:9px 4px 0 7px;display:flex;flex-direction:column}
.up{width:0;height:0;border:5px solid transparent;border-bottom:6px solid #777;border-top:0;margin:0 0 3px -1px;display:block}
.vthumb{display:block;width:9px;height:144px;background:#6e6e6e;border-radius:5px}
.down{display:block;position:absolute;left:6px;bottom:2px;width:0;height:0;border:5px solid transparent;border-top:6px solid #777;border-bottom:0}

.sheetbar{height:32px;display:flex;align-items:flex-start;background:#f0f0f0;flex:none;position:relative}
.nav{width:111px;height:32px;display:flex;padding:9px 0 0 24px;gap:24px}
.nav svg{width:8px;height:12px}
.sheettab{width:52px;height:28px;background:#fff;border-radius:0 0 4px 4px;font-size:14px;font-weight:700;text-align:center;padding:4px 8px 0;letter-spacing:-.4px;color:#333}
.sheettab span{display:block;border-bottom:2px solid #107c41;line-height:19px;height:23px;margin:0}
.tabsep{width:1px;height:20px;background:#ccc;margin:7px 0 0 5px}
.plus{width:18px;margin:2px 0 0 37px;font-size:20px;font-weight:300;line-height:28px;color:#444;text-align:center}
.k2{margin:9px 0 0 534px;width:16px;font-size:15px}
.hscroll{width:471px;height:17px;margin:7px 0 0 11px;background:#f7f7f7;border-radius:8px;display:flex;align-items:center;padding:0 4px;position:relative}
.left{width:0;height:0;border:5px solid transparent;border-right:6px solid #555;border-left:0}
.hthumb{width:263px;height:9px;background:#6e6e6e;border-radius:5px;margin-left:5px}
.right{width:0;height:0;border:5px solid transparent;border-left:6px solid #555;border-right:0;margin-left:auto}

.status{height:22px;background:#f3f3f3;display:flex;align-items:center;font-size:11px;padding-left:7px;color:#444;flex:none;white-space:nowrap;letter-spacing:-.1px}
.ready{width:58px}
.acc{width:15px;height:15px;margin-right:4px}
.viewbtns{display:flex;gap:26px;margin-left:auto}
.viewbtns svg{width:14px;height:14px}
.zm{color:#aaa;font-size:14px;width:9px;margin-left:22px;line-height:1}
.slider{width:100px;height:1px;background:#555;margin-left:3px;position:relative}
.slider i{position:absolute;left:50%;top:-3px;width:1px;height:7px;background:#555}
.slider+.zm{margin-left:5px}
.pctz{color:#aaa;margin:0 7px 0 9px;font-size:11.500px}

/* taskbar */
.taskbar{height:47px;background:#d5dde5;border-top:1px solid #c3c3c3;display:flex;align-items:center;flex:none;position:relative}
.coins{width:20px;height:24px;margin-left:15px;position:relative}
.coins svg{width:20px;height:24px}
.badge{position:absolute;width:16px;height:16px;border-radius:50%;color:#fff;font-size:10px;font-weight:400;display:flex;align-items:center;justify-content:center}
.red{background:#c42b1c;left:11px;top:-4px}
.blue{background:#0f78d4;right:0;top:-5px}
.start{width:23px;height:23px;margin-left:176px}
.tsearch{width:218px;height:30px;margin-left:14px;background:#f2f4f7;border-radius:15px;display:flex;align-items:center;padding-left:11px;font-size:14px;color:#555;box-shadow:0 1px 1px rgba(0,0,0,.1)}
.ts-ico{width:16px;height:16px;margin-right:9px}
.shark{width:46px;height:30px;margin-left:auto;margin-right:6px}
.apps{display:flex;margin-left:3px}
.app-s{width:44px;height:39px;display:flex;align-items:center;justify-content:center;position:relative}
.a24{width:24px;height:24px}
.a28{width:28px;height:28px}
.on{background:#e9eef3;border-radius:4px;width:38px;margin:0 3px}
.on::after{content:"";position:absolute;left:11px;bottom:0;width:16px;height:3px;border-radius:2px;background:#0f78d4}
.app-s:nth-child(n+7):not(.on)::after{content:"";position:absolute;left:19px;bottom:0;width:6px;height:3px;border-radius:2px;background:#888}
.tray{position:absolute;left:1020px;top:0;height:46px;display:grid;grid-template-columns:14px 59px 20px 28px 20px 71px 32px;align-items:center;justify-items:center;font-size:12px;color:#222;letter-spacing:-.2px}
.tchev{width:12px;height:7px}
.lang{text-align:center;padding-left:4px;font-size:11.500px}
.t16{width:17px;height:16px}
.clock{display:flex;flex-direction:column;align-items:flex-end;line-height:15px;white-space:nowrap;justify-self:end}
.bell{height:18px}

/* dialog */
.dialog{position:absolute;left:247px;top:287px;width:418px;height:369px;background:#f0f0f0;border:1px solid #c9c9c9;border-radius:8px;box-shadow:0 4px 40px rgba(0,0,0,.38);font-size:10.500px;color:#1b1b1b;overflow:hidden;letter-spacing:.15px}
.dtitle{height:30px;background:#eff4f9;display:flex;align-items:center;padding:0 0 2px 8px;font-size:11px}
.dtitle span:first-child{flex:1}
.q{font-size:12px;margin-right:38px}
.dtitle svg{width:12px;height:12px;margin-right:17px}
.dbody{padding:7px 6px 0 6px}
.dl{line-height:14px}
.drow1{display:flex;margin:6px 0 0 9px;align-items:flex-start}
.dinput{width:312px;height:32px;background:#fff;border:1px solid #a8a8a8;padding:3px 0 0 3px;line-height:13px;white-space:nowrap;letter-spacing:.37px}
.dinput span{background:#b7b7b7}
.dbtn{font:inherit;letter-spacing:inherit;width:74px;height:22px;border:1px solid #d4d4d4;background:#fdfdfd;border-radius:4px;color:#1b1b1b;padding:0}
.primary{border:1px solid #0067c0;margin-left:9px}
.drow2{display:flex;margin:3px 0 0 9px;height:21px;align-items:center}
.catlabel{width:61px}
.dselect{width:251px;height:21px;background:#fff;border:1px solid #a8a8a8;display:flex;align-items:center;justify-content:space-between;padding-left:3px}
.dselect i{width:17px;height:19px;background:#f5f5f5;border-left:1px solid #c8c8c8;display:flex;align-items:center;justify-content:center}
.dselect svg{width:10px;height:6px}
.l2{margin-top:9px}
.dlist{position:relative;width:396px;height:95px;margin:6px 0 0 9px;background:#fff;border:1px solid #8f8f8f;padding:1px;overflow:hidden}
.item{height:13px;line-height:15px;padding-left:2px;width:375px}
.selitem{background:#0078d4;color:#cfe6f7}
.dthumb{position:absolute;right:7px;top:18px;width:3px;height:40px;background:#8a8a8a;border-radius:2px}
.fnsig{font-weight:700;margin:3px 0 0 9px;line-height:14px;letter-spacing:.2px}
.fndesc{margin:2px 0 0 9px;line-height:15px}
.dfoot{display:flex;align-items:center;margin-top:53px;padding-top:12px;border-top:1px solid #dcdcdc;width:404px;gap:10px}
.helplink{color:#0067c0;text-decoration:underline;flex:1;font-size:10.500px;letter-spacing:.45px;white-space:nowrap}

/* annotations */
.annot{position:absolute;left:0;top:0;width:1274px;height:719px;pointer-events:none}
.note{position:absolute;left:780px;top:406px;width:480px;color:#f00;font-size:32px;line-height:43.500px;letter-spacing:3.300px;white-space:nowrap;font-family:"Noto Sans",sans-serif}
.n1{padding-left:10px}
.n2{padding-left:36px}
.n3{padding-left:93px;letter-spacing:2.900px}
```
